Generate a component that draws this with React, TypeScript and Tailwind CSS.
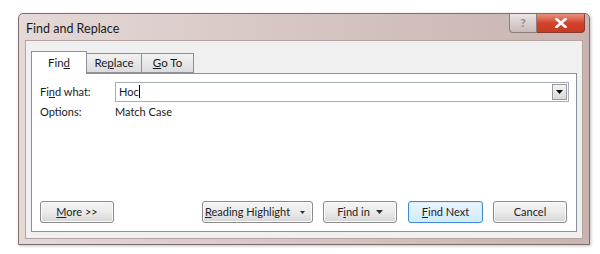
import React from "react";

const font = { fontFamily: 'Lato, "Open Sans", sans-serif' };

function Btn({
  children,
  className = "",
  primary = false,
}: {
  children: React.ReactNode;
  className?: string;
  primary?: boolean;
}) {
  return (
    <div
      className={`flex h-[22px] items-center justify-center whitespace-nowrap rounded-[3px] border text-[11px] text-[#222] ${
        primary
          ? "border-[#3c8ccc] bg-gradient-to-b from-[#eaf6fd] to-[#cfeafb] shadow-[inset_0_0_0_1px_#d6eefb]"
          : "border-[#8a8a8a] bg-gradient-to-b from-[#f4f4f4] via-[#ebebeb] to-[#d6d6d6] shadow-[inset_0_0_0_1px_#fbfbfb]"
      } ${className}`}
    >
      {children}
    </div>
  );
}

function Caret() {
  return (
    <svg width="7" height="4" viewBox="0 0 7 4" className="ml-[6px]">
      <path d="M0 0h7L3.5 4z" fill="#333" />
    </svg>
  );
}

export default function App() {
  return (
    <div className="h-[254px] w-[600px] bg-white pl-[18px] pt-[13px]" style={font}>
      <div className="flex h-[232px] w-[572px] flex-col rounded-t-[5px] border border-[#7d6d6b] bg-gradient-to-r from-[#e4d9d7] via-[#d6c5c2] to-[#c9b4b1] px-[6px] pb-[5px] shadow-[1px_1px_3px_rgba(0,0,0,0.25)]">
        {/* title bar */}
        <div className="flex h-[26px] shrink-0 items-start justify-between">
          <span className="pl-[1px] pt-[6px] text-[12.5px] text-[#1a1a1a]">Find and Replace</span>
          <div className="-mr-[2px] flex h-[19px]">
            <div className="flex w-[28px] items-center justify-center rounded-bl-[4px] border border-t-0 border-[#8d7e7c] bg-gradient-to-b from-[#ede5e4] to-[#c8bab8] text-[12px] font-bold text-[#8b8b8b]">
              ?
            </div>
            <div className="flex w-[48px] items-center justify-center rounded-br-[4px] border border-l-0 border-t-0 border-[#8a3a2e] bg-gradient-to-b from-[#e8907f] via-[#d2432c] to-[#c93a22]">
              <svg width="12" height="10" viewBox="0 0 12 10">
                <path d="M1.5 1l9 8M10.5 1l-9 8" stroke="#fff" strokeWidth="2.6" strokeLinecap="square" />
              </svg>
            </div>
          </div>
        </div>
        {/* client area */}
        <div className="flex flex-1 flex-col border border-[#b4a3a0] bg-[#f0f0f0] px-[5px] pb-[6px] pt-[9px]">
          {/* tabs */}
          <div className="flex h-[23px] items-end text-[11.5px] text-[#1a1a1a]">
            <div className="relative z-10 -mb-px flex h-[23px] w-[56px] items-center justify-center border border-b-0 border-[#8d919a] bg-white">
              <span>
                Fin<u>d</u>
              </span>
            </div>
            <div className="flex h-[20px] w-[55px] items-center justify-center border border-l-0 border-[#8d919a] bg-gradient-to-b from-[#f2f2f2] to-[#dcdcdc]">
              <span>
                Re<u>p</u>lace
              </span>
            </div>
            <div className="flex h-[20px] w-[52px] items-center justify-center border border-l-0 border-[#8d919a] bg-gradient-to-b from-[#f2f2f2] to-[#dcdcdc]">
              <span>
                <u>G</u>o To
              </span>
            </div>
          </div>
          {/* panel */}
          <div className="flex flex-1 flex-col border border-[#8d919a] bg-white pb-[8px] pl-[8px] pr-[7px] pt-[8px] text-[11px] text-[#1a1a1a]">
            <div className="flex h-[20px] items-center">
              <span className="w-[75px]">
                Fi<u>n</u>d what:
              </span>
              <div className="flex h-[20px] flex-1 items-center border border-[#a5acb5] bg-white pl-[3px]">
                <span className="flex-1">
                  Hoc<span className="inline-block h-[13px] w-px translate-y-[2px] bg-black" />
                </span>
                <div className="mr-px flex h-[16px] w-[15px] items-center justify-center border border-[#9a9a9a] bg-gradient-to-b from-[#f4f4f4] to-[#d9d9d9]">
                  <svg width="7" height="4" viewBox="0 0 7 4">
                    <path d="M0 0h7L3.5 4z" fill="#111" />
                  </svg>
                </div>
              </div>
            </div>
            <div className="mt-[1px] flex h-[18px] items-center">
              <span className="w-[75px]">Options:</span>
              <span>Match Case</span>
            </div>
            <div className="mt-auto flex items-center">
              <Btn className="w-[74px]">
                <span>
                  <u>M</u>ore &gt;&gt;
                </span>
              </Btn>
              <Btn className="ml-[88px] w-[111px] !justify-start pl-[2px]">
                <span>
                  <u>R</u>eading Highlight
                </span>
                <svg width="5" height="3" viewBox="0 0 5 3" className="ml-auto mr-[7px]">
                  <path d="M0 0h5L2.5 3z" fill="#333" />
                </svg>
              </Btn>
              <Btn className="ml-[10px] w-[74px]">
                <span>
                  F<u>i</u>nd in
                </span>
                <Caret />
              </Btn>
              <Btn primary className="ml-[11px] w-[75px]">
                <span>
                  <u>F</u>ind Next
                </span>
              </Btn>
              <Btn className="ml-[10px] w-[74px]">Cancel</Btn>
            </div>
          </div>
        </div>
      </div>
    </div>
  );
}
